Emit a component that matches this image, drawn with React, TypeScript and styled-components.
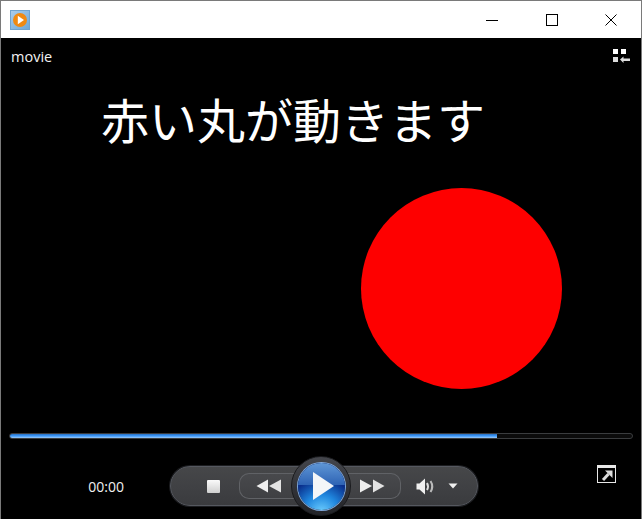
import styled, { createGlobalStyle } from 'styled-components';

const GlobalStyle = createGlobalStyle`
    html, body {
        margin: 0;
        padding: 0;
        background: #000;
    }
    #root {
        width: 642px;
        height: 519px;
    }
`;

const Window = styled.div`
    box-sizing: border-box;
    width: 642px;
    height: 519px;
    border: 1px solid #7a7a7a;
    border-bottom: 0;
    display: flex;
    flex-direction: column;
    font-family: 'Segoe UI', 'Open Sans', 'Noto Sans', sans-serif;
    overflow: hidden;
`;

const TitleBar = styled.div`
    height: 37px;
    flex: none;
    background: #fff;
    display: flex;
    align-items: center;
    justify-content: space-between;
    padding-left: 9px;
`;

const AppIcon = styled.div`
    box-sizing: border-box;
    width: 20px;
    height: 20px;
    border: 1px solid #6fa3cf;
    background: linear-gradient(135deg, #a9cdeb, #6ea8d8);
    display: flex;
    align-items: center;
    justify-content: center;
`;

const WindowButtons = styled.div`
    display: flex;
`;

const WindowButton = styled.div`
    width: 59.5px;
    height: 37px;
    display: flex;
    align-items: center;
    justify-content: center;
`;

const Player = styled.div`
    position: relative;
    flex: 1;
    background: #000;
    display: flex;
    flex-direction: column;
`;

const TopRow = styled.div`
    height: 36px;
    flex: none;
    display: flex;
    align-items: center;
    justify-content: space-between;
    padding: 0 11px 0 10px;
`;

const MovieTitle = styled.div`
    color: #f2f2f2;
    font-size: 14.5px;
`;

const Stage = styled.div`
    position: relative;
    height: 358px;
    flex: none;
`;

const Caption = styled.h1`
    margin: 11px 0 0;
    padding-left: 100px;
    color: #fff;
    font-family: 'Noto Sans CJK JP', sans-serif;
    font-size: 48px;
    font-weight: 400;
    line-height: 66px;
`;

const RedBall = styled.div`
    position: absolute;
    left: 360px;
    top: 114px;
    width: 201px;
    height: 201px;
    border-radius: 50%;
    background: #fe0000;
`;

const SeekBar = styled.div`
    box-sizing: border-box;
    margin: 1px 8px 0 8px;
    height: 6px;
    border: 1px solid #3a3c3e;
    border-radius: 3px;
    background: #0b0b0b;
    flex: none;
`;

const SeekFill = styled.div`
    height: 100%;
    background: linear-gradient(#2a6fc0, #3d9bff 50%, #9ecbf5);
    border-radius: 2px 0 0 2px;
`;

const ControlRow = styled.div`
    flex: 1;
    position: relative;
    display: flex;
    align-items: flex-start;
`;

const TimeLabel = styled.div`
    width: 169px;
    padding-top: 38px;
    padding-right: 46px;
    box-sizing: border-box;
    text-align: right;
    color: #f0f0f0;
    font-size: 14px;
    line-height: 20px;
`;

const ControlPill = styled.div`
    box-sizing: border-box;
    margin-top: 27px;
    width: 308px;
    height: 40px;
    border-radius: 20px;
    border: 1px solid #55585f;
    background: linear-gradient(#464749, #404144 50%, #3a3b3e);
    box-shadow: 0 0 0 1px #1c1d20;
    display: flex;
    align-items: center;
    padding-left: 36px;
`;

const StopIcon = styled.div`
    width: 13px;
    height: 13px;
    background: linear-gradient(#fafafa, #cfcfcf);
    border-radius: 1px;
    margin-right: 19px;
`;

const SkipButton = styled.div<{ $side: 'left' | 'right' }>`
    box-sizing: border-box;
    height: 26px;
    border: 1px solid #606266;
    background: linear-gradient(#48494c, #3f4043);
    display: flex;
    align-items: center;
    justify-content: center;
    width: ${(p) => (p.$side === 'left' ? '56px' : '54px')};
    border-radius: ${(p) => (p.$side === 'left' ? '10px 0 0 10px' : '0 10px 10px 0')};
    ${(p) => (p.$side === 'left' ? 'border-right: 0; padding-left: 2px;' : 'border-left: 0; padding-right: 4px;')}
`;

const PlayRing = styled.div`
    width: 60px;
    height: 60px;
    flex: none;
    margin: 0 -4px;
    position: relative;
    z-index: 1;
    border-radius: 50%;
    background: linear-gradient(#44464c, #222327);
    border: 1px solid #1a1b1e;
    box-sizing: border-box;
    display: flex;
    align-items: center;
    justify-content: center;
`;

const PlayDisc = styled.div`
    position: relative;
    width: 47px;
    height: 47px;
    border-radius: 50%;
    background: radial-gradient(circle at 50% 105%, #6fd0ff 0%, #1f86de 32%, #0a2f8c 62%, #0b2a80 100%);
    box-shadow: 0 0 0 1px #7fa8dc;
    overflow: hidden;
    display: flex;
    align-items: center;
    justify-content: center;
`;

const PlayGloss = styled.div`
    position: absolute;
    left: 0;
    top: 0;
    width: 100%;
    height: 48%;
    background: linear-gradient(#5f97d6, #2e63b4);
`;

const PlayGlyph = styled.svg`
    position: relative;
    margin-left: 4px;
`;

const VolumeGroup = styled.div`
    display: flex;
    align-items: center;
    gap: 12px;
    margin-left: 15px;
`;

const FullscreenButton = styled.div`
    position: absolute;
    top: 26px;
    right: 25px;
    box-sizing: border-box;
    width: 19px;
    height: 18px;
    border: 1px solid #e8e8e8;
    border-top-width: 3px;
    display: flex;
    align-items: center;
    justify-content: center;
`;

const App = () => {
    return (
        <Window>
            <GlobalStyle />
            <TitleBar>
                <AppIcon>
                    <svg width="16" height="16" viewBox="0 0 16 16">
                        <circle cx="8" cy="8" r="7" fill="#f08a12" />
                        <path d="M5.8 3.8 L12 8 L5.8 12.2 Z" fill="#fff" />
                    </svg>
                </AppIcon>
                <WindowButtons>
                    <WindowButton>
                        <svg width="12" height="12" viewBox="0 0 12 12">
                            <path d="M0 6.5H12" stroke="#000" strokeWidth="1" />
                        </svg>
                    </WindowButton>
                    <WindowButton>
                        <svg width="12" height="12" viewBox="0 0 12 12">
                            <rect x="0.5" y="0.5" width="11" height="11" fill="none" stroke="#000" />
                        </svg>
                    </WindowButton>
                    <WindowButton>
                        <svg width="12" height="12" viewBox="0 0 12 12">
                            <path d="M0.5 0.5L11.5 11.5M11.5 0.5L0.5 11.5" stroke="#000" strokeWidth="1" />
                        </svg>
                    </WindowButton>
                </WindowButtons>
            </TitleBar>
            <Player>
                <TopRow>
                    <MovieTitle>movie</MovieTitle>
                    <svg width="18" height="15" viewBox="0 0 18 15">
                        <rect x="1" y="0" width="5" height="5" fill="#fff" />
                        <rect x="9" y="0" width="5" height="5" fill="#fff" />
                        <rect x="1" y="8" width="5" height="5" fill="#ddd" />
                        <path d="M8 10.5L11.5 7.5V9.5H18V12H11.5V14Z" fill="#ddd" />
                    </svg>
                </TopRow>
                <Stage>
                    <Caption>赤い丸が動きます</Caption>
                    <RedBall />
                </Stage>
                <SeekBar>
                    <SeekFill style={{ width: `${(487 / 622) * 100}%` }} />
                </SeekBar>
                <ControlRow>
                    <TimeLabel>00:00</TimeLabel>
                    <ControlPill>
                        <StopIcon />
                        <SkipButton $side="left">
                            <svg width="26" height="14" viewBox="0 0 26 14">
                                <path d="M0.5 7L12 0.5V13.5Z" fill="#eee" />
                                <path d="M13 7L25 0.5V13.5Z" fill="#e2e2e2" />
                            </svg>
                        </SkipButton>
                        <PlayRing>
                            <PlayDisc>
                                <PlayGloss />
                                <PlayGlyph width="23" height="30" viewBox="0 0 23 30">
                                    <path d="M1 1L22 15L1 29Z" fill="#f4f6f8" />
                                </PlayGlyph>
                            </PlayDisc>
                        </PlayRing>
                        <SkipButton $side="right">
                            <svg width="26" height="14" viewBox="0 0 26 14">
                                <path d="M1 0.5L13 7L1 13.5Z" fill="#eee" />
                                <path d="M14 0.5L25.5 7L14 13.5Z" fill="#e2e2e2" />
                            </svg>
                        </SkipButton>
                        <VolumeGroup>
                            <svg width="20" height="17" viewBox="0 0 20 17">
                                <path d="M0.5 5.5H3.5L9 0.5V16.5L3.5 11.5H0.5Z" fill="#f0f0f0" />
                                <path d="M11 5Q13 8.5 11 12" stroke="#ddd" strokeWidth="2" fill="none" />
                                <path d="M14.5 3Q18 8.5 14.5 14" stroke="#bbb" strokeWidth="2" fill="none" />
                            </svg>
                            <svg width="10" height="6" viewBox="0 0 10 6">
                                <path d="M0.5 0.5H9.5L5 5.5Z" fill="#f0f0f0" />
                            </svg>
                        </VolumeGroup>
                    </ControlPill>
                    <FullscreenButton>
                        <svg width="14" height="12" viewBox="0 0 14 12">
                            <path d="M3 11L8.5 5" stroke="#ddd" strokeWidth="3" fill="none" />
                            <path d="M5 1.5H12.5V9Z" fill="#ddd" />
                        </svg>
                    </FullscreenButton>
                </ControlRow>
            </Player>
        </Window>
    );
};

export default App;
